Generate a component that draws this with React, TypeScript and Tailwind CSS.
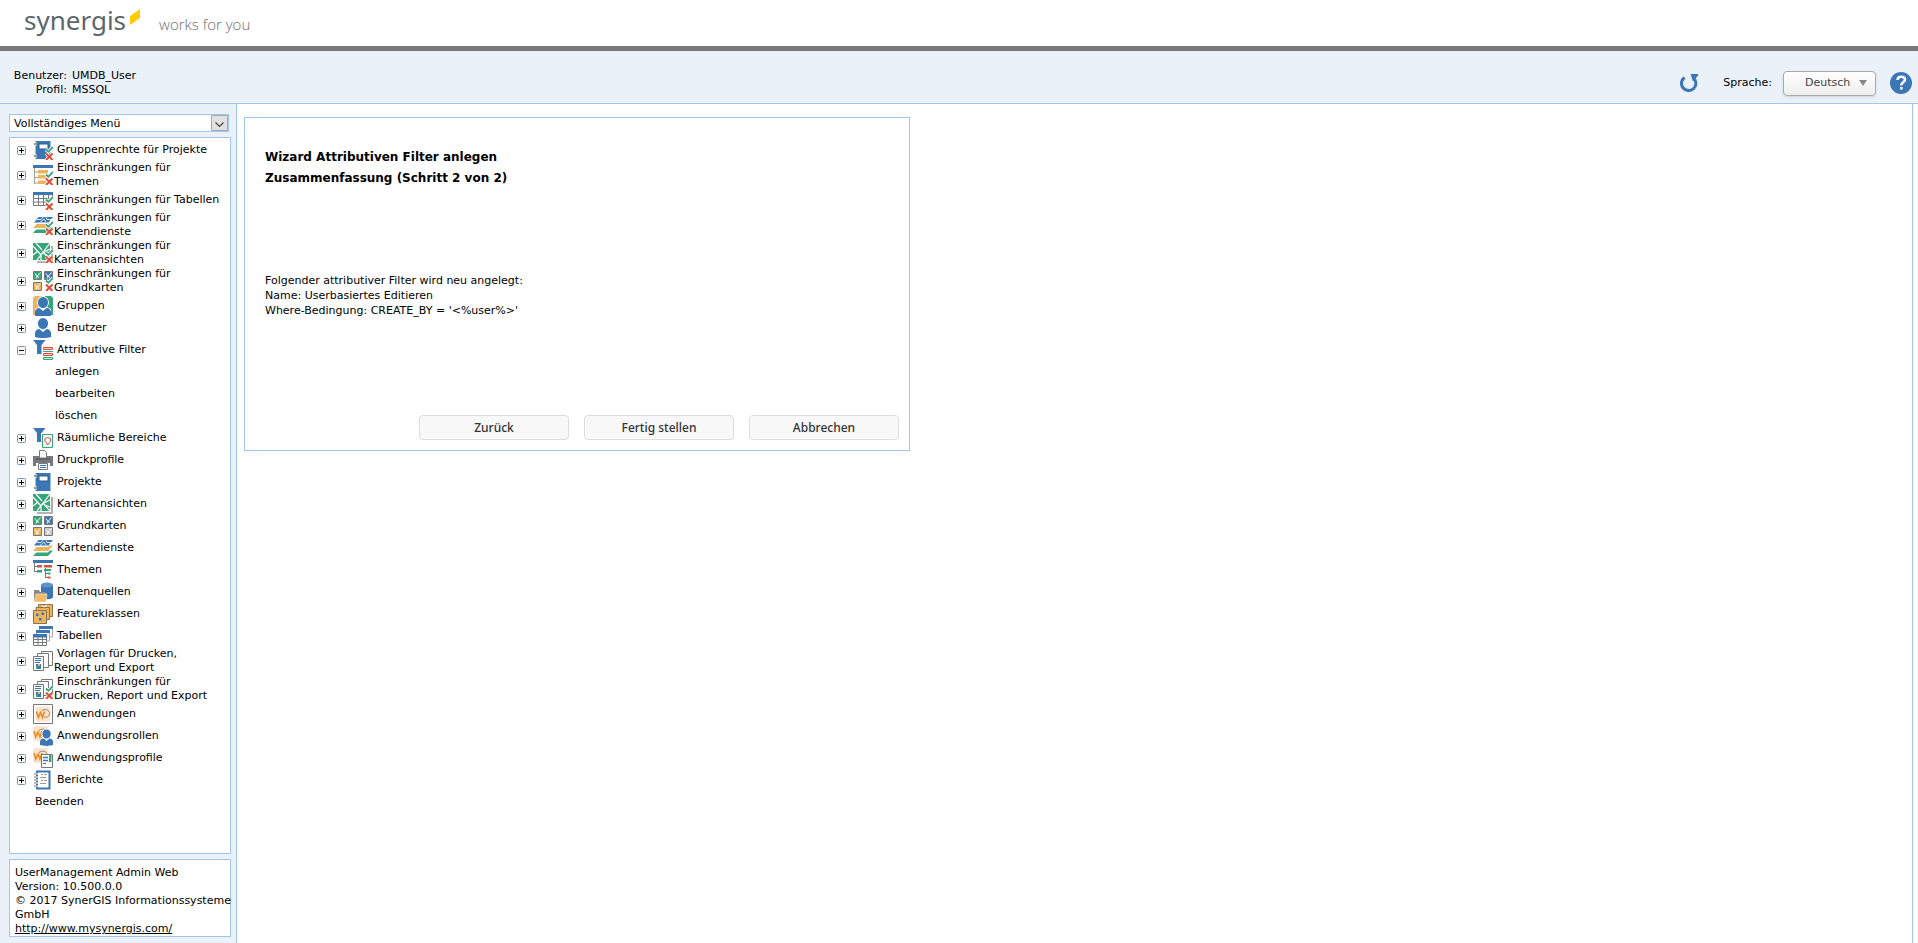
import type { ReactNode } from 'react';

interface MenuEntry {
    label: string;
    icon: ReactNode;
    children?: string[];
}

const BLUE = '#3b76b5';
const GREEN = '#35a678';
const RED = '#dd4f3c';
const ORANGE = '#ecb45c';
const GRAY = '#77787b';

function Icon({ children }: { children: ReactNode }) {
    return (
        <svg viewBox="0 0 20 20" className="h-5 w-5 shrink-0" fill="none" aria-hidden="true">
            {children}
        </svg>
    );
}

function Restriction() {
    return (
        <>
            <path d="M13 9.5l2.3 2.3L20 7" stroke="#fff" strokeWidth="3.4" />
            <path d="M13 9.5l2.3 2.3L20 7" stroke={GREEN} strokeWidth="1.8" />
            <path d="M13 13.5l6.5 6.5M19.5 13.5L13 20" stroke="#fff" strokeWidth="3.2" />
            <path d="M13 13.5l6.5 6.5M19.5 13.5L13 20" stroke={RED} strokeWidth="2" />
        </>
    );
}

function Notebook() {
    return (
        <>
            <path d="M2.5 1h15v18h-15z" fill={BLUE} />
            <path d="M6 4h9v5H6z" fill="#fff" stroke="#285d96" />
            <path d="M1 4h3M1 16h3" stroke="#fff" strokeWidth="3" />
            <path d="M1 4h3M1 16h3" stroke={GRAY} strokeWidth="1.4" />
        </>
    );
}

function MapView() {
    return (
        <>
            <path d="M19 3v16H4" stroke="#9a9a9a" strokeWidth="1.6" />
            <path d="M0 0h17v17H0z" fill={GREEN} />
            <path
                d="M0 3l8 9 9-12M3 0l6 7M0 12l5-4M4 17l6-8 7 8M11 9l6-3M12 11l5 2M8 12v5"
                stroke="#fff"
                strokeWidth="1.2"
            />
        </>
    );
}

function MapTile({ x, y, fill }: { x: number; y: number; fill: string }) {
    return (
        <g transform={`translate(${x} ${y})`}>
            <path d="M.5.5h8v8h-8z" fill={fill} stroke={GRAY} />
            <path d="M2 2.500l2 3L7.500 1.500M3 7.500l1-2 2 1" stroke="#fff" />
        </g>
    );
}

function BaseMaps() {
    return (
        <>
            <MapTile x={0} y={0} fill={GREEN} />
            <MapTile x={11} y={0} fill={BLUE} />
            <MapTile x={0} y={11} fill={ORANGE} />
            <MapTile x={11} y={11} fill="#c9c9c9" />
        </>
    );
}

function MapLayers() {
    return (
        <>
            <path d="M5 12.500h15L15 18H0z" fill={GREEN} />
            <path d="M5 8h15l-5 6.500H0z" fill="#fff" />
            <path d="M5 7.500h15L15 13H0z" fill={ORANGE} />
            <path d="M5 3h15l-5 6H0z" fill="#fff" />
            <path d="M5.500 2H20l-4.500 5.500H1z" fill={BLUE} />
            <path d="M4 4.500h4l2-2.500M7 7.500l4-3.500 2 3M13 2l1 2.500h4" stroke="#fff" strokeWidth=".8" />
        </>
    );
}

function Funnel() {
    return <path d="M0 0h12.500L8.500 5v9H4V5z" fill={BLUE} />;
}

function Person({ x, y, scale, fill }: { x: number; y: number; scale: number; fill: string }) {
    return (
        <g transform={`translate(${x} ${y}) scale(${scale})`} fill={fill}>
            <path d="M8 0a5 5 0 0 1 5 5.500c0 3-2 5.500-5 5.500S3 8.500 3 5.500A5 5 0 0 1 8 0z" />
            <path d="M0 19v-4c0-2 2-4 4.500-4L8 14l3.500-3c2.500 0 4.500 2 4.500 4v4c-4 1.300-12 1.300-16 0z" />
        </g>
    );
}

function Reports() {
    return (
        <>
            <path d="M8.500.5h11v14h-11z" fill="#fff" stroke={GRAY} />
            <path d="M4.500 2.500h11v14h-11z" fill="#fff" stroke={GRAY} />
            <path d="M.5 5.500h10v14H.5z" fill="#fff" stroke={GRAY} />
            <path d="M2 7.500h6M2 9.500h6M2 11.500h5" stroke={BLUE} />
            <path d="M3 13h5v5H3z" fill={BLUE} />
            <path d="M3 15h2v3H3z" fill={GREEN} />
            <path d="M5 13h2v2H5z" fill={ORANGE} />
        </>
    );
}

function AppMark() {
    return (
        <>
            <rect width="15" height="15" rx="3" fill="#fbe3cc" />
            <path d="M1 5l1.800 6L5 6l2 5 2-6" stroke="#ee8a1d" strokeWidth="1.600" />
            <path d="M6 4.500C9 2 14 3 14 7s-4 4.500-5.500 3" stroke="#8d8781" />
        </>
    );
}

const menu: MenuEntry[] = [
    {
        label: 'Gruppenrechte für Projekte',
        icon: <><Notebook /><Restriction /></>,
    },
    {
        label: 'Einschränkungen für\nThemen',
        icon: (
            <>
                <path d="M0 0h20v3H0z" fill={BLUE} />
                <path d="M1.500 3v16M1 7h4M1 12.500h4M1 18h4" stroke="#a0a0a0" />
                <path d="M5 5h10v3.500H5zM5 10h9v3.500H5zM5 15.500h8V19H5z" fill={ORANGE} />
                <Restriction />
            </>
        ),
    },
    {
        label: 'Einschränkungen für Tabellen',
        icon: (
            <>
                <path d="M0 2h20v3H0z" fill={BLUE} />
                <path d="M.5 5v10.500M5.500 5v10.500M10.500 5v10.500M15.500 5v10M19.500 5v4M0 8.500h20M0 12h15M0 15.500h13" stroke={GRAY} />
                <Restriction />
            </>
        ),
    },
    {
        label: 'Einschränkungen für\nKartendienste',
        icon: <><MapLayers /><Restriction /></>,
    },
    {
        label: 'Einschränkungen für\nKartenansichten',
        icon: <><MapView /><Restriction /></>,
    },
    {
        label: 'Einschränkungen für\nGrundkarten',
        icon: (
            <>
                <MapTile x={0} y={0} fill={GREEN} />
                <MapTile x={11} y={0} fill={BLUE} />
                <MapTile x={0} y={11} fill={ORANGE} />
                <Restriction />
            </>
        ),
    },
    {
        label: 'Gruppen',
        icon: (
            <>
                <path d="M0 19V2l2-2h6v14l-4 5z" fill={ORANGE} />
                <path d="M20 19V2l-2-2h-6v14l4 5z" fill={GREEN} />
                <path d="M10 0a6.500 6.500 0 0 1 4 11l4 2v7H2v-7l4-2A6.500 6.500 0 0 1 10 0z" fill="#fff" />
                <Person x={2} y={1} scale={1} fill={BLUE} />
            </>
        ),
    },
    {
        label: 'Benutzer',
        icon: <Person x={2} y={0} scale={1} fill={BLUE} />,
    },
    {
        label: 'Attributive Filter',
        icon: (
            <>
                <Funnel />
                <path d="M9 6h11v14H9z" fill="#fff" />
                <path d="M10.500 7.500h9v2h-9zM10.500 13.500h9v2h-9z" stroke={RED} fill="#f8d3cd" />
                <path d="M10 11.500h10M10.500 17.500h9v2h-9z" stroke={GREEN} fill="#c4e7da" />
            </>
        ),
        children: ['anlegen', 'bearbeiten', 'löschen'],
    },
    {
        label: 'Räumliche Bereiche',
        icon: (
            <>
                <Funnel />
                <path d="M8 5h12v15H8z" fill="#fff" />
                <path d="M9.500 6.500h10v13h-10z" fill="#f4fbf8" stroke={GREEN} />
                <path d="M12 10.500l2.500-1 3 1v3l-3 3.500-1-2.500-1.500-1z" stroke={RED} />
            </>
        ),
    },
    {
        label: 'Druckprofile',
        icon: (
            <>
                <path d="M0 6h20v10h-3v-3H3v3H0z" fill={GRAY} />
                <path d="M3 9h14" stroke="#4f5052" />
                <path d="M6.500 8V.5h5l2 2V8z" fill="#fff" stroke={GRAY} />
                <path d="M5.500 13.500h9v6h-9z" fill="#fff" stroke={GRAY} />
                <path d="M7 15.500h6M7 17.500h6" stroke={BLUE} />
            </>
        ),
    },
    { label: 'Projekte', icon: <Notebook /> },
    { label: 'Kartenansichten', icon: <MapView /> },
    { label: 'Grundkarten', icon: <BaseMaps /> },
    { label: 'Kartendienste', icon: <MapLayers /> },
    {
        label: 'Themen',
        icon: (
            <>
                <path d="M0 0h20v3H0z" fill={BLUE} />
                <path d="M1.500 3v9M1 6.500h4M1 11.500h4M12.500 8v10M12 13.500h3M12 17.500h3" stroke={GRAY} />
                <path d="M4 5h5v2.500H4zM11 5h8v2.500h-8z" fill={RED} />
                <path d="M4 10h5v2.500H4zM11 9h7v2h-7z" fill={GREEN} />
                <path d="M14.500 12.500h3v2h-3z" fill={GREEN} />
                <path d="M14.500 16.500h3v2h-3z" fill={RED} />
            </>
        ),
    },
    {
        label: 'Datenquellen',
        icon: (
            <>
                <path d="M8 3v12c0 3 12 3 12 0V3z" fill={BLUE} />
                <ellipse cx="14" cy="3" rx="6" ry="2.500" fill="#5f93c9" />
                <path d="M1 19V8h5l1 2h6v9z" fill="#8a8a8a" />
                <path d="M3 12h11l-1 8H1z" fill="#f1bc68" stroke="#fff" strokeWidth=".5" />
            </>
        ),
    },
    {
        label: 'Featureklassen',
        icon: (
            <>
                <path d="M5.500.5h14v12h-14z" fill={ORANGE} stroke="#8a7350" />
                <path d="M3 3.500h13.500v12H3z" fill={ORANGE} stroke="#8a7350" />
                <path d="M.5 6.500h13v13H.5z" fill={ORANGE} stroke="#8a7350" />
                <path d="M9 1.500l2 1.500 3-2" stroke="#fff" />
                <path d="M3 9.500h2.500V12H3zM8.500 8.500H11V11H8.500zM6 14h2.500v2.500H6z" fill={BLUE} />
            </>
        ),
    },
    {
        label: 'Tabellen',
        icon: (
            <>
                <path d="M6.500 1h13v10h-13z" fill="#fff" stroke="#a5a6a8" />
                <path d="M6 0h14v3H6z" fill={BLUE} />
                <path d="M3.500 5h13v10h-13z" fill="#fff" stroke="#a5a6a8" />
                <path d="M3 4h14v3H3z" fill={BLUE} />
                <path d="M.5 9.500h13v10H.5z" fill="#fff" />
                <path d="M0 8h14v3.500H0z" fill={BLUE} />
                <path d="M.5 11v8.500h13V11M5 11v8.500M9.500 11v8.500M0 13.500h14M0 16.500h14" stroke={GRAY} />
            </>
        ),
    },
    { label: 'Vorlagen für Drucken,\nReport und Export', icon: <Reports /> },
    {
        label: 'Einschränkungen für\nDrucken, Report und Export',
        icon: <><Reports /><Restriction /></>,
    },
    {
        label: 'Anwendungen',
        icon: (
            <>
                <path d="M.5.5h19v19H.5z" fill="#fff" stroke={GRAY} />
                <g transform="translate(2.500 2.500)"><AppMark /></g>
            </>
        ),
    },
    {
        label: 'Anwendungsrollen',
        icon: (
            <>
                <AppMark />
                <circle cx="13.500" cy="8" r="5" fill="#fff" />
                <Person x={7} y={3.5} scale={0.82} fill={BLUE} />
            </>
        ),
    },
    {
        label: 'Anwendungsprofile',
        icon: (
            <>
                <AppMark />
                <path d="M8.500 6.500h11v13h-11z" fill="#fff" stroke={GRAY} />
                <path d="M10 9.500h5M10 12.500h5" stroke={BLUE} strokeWidth="1.500" />
                <path d="M10 15.500h3" stroke={BLUE} />
                <path d="M16 7h2.500v7H16z" fill={GREEN} />
            </>
        ),
    },
    {
        label: 'Berichte',
        icon: (
            <>
                <path d="M4 1.500h12.500v17H4z" fill="#fff" stroke={BLUE} strokeWidth="2" />
                <path d="M1 4h4M1 7h4M1 10h4M1 13h4M1 16h4" stroke="#fff" strokeWidth="2" />
                <path d="M1 4h4M1 7h4M1 10h4M1 13h4M1 16h4" stroke={GRAY} />
                <path d="M8 4.500h2M11 4.500h3M7 7.500h6M8 10.500h2M11 10.500h3M7 13.500h6" stroke="#9b9b9b" />
            </>
        ),
    },
];

function Expander({ open, label }: { open: boolean; label: string }) {
    return (
        <button type="button" aria-label={label} aria-expanded={open} className="mr-[7px] h-[9px] w-[9px] shrink-0">
            <svg viewBox="0 0 9 9" className="block h-[9px] w-[9px]">
                <rect x=".5" y=".5" width="8" height="8" rx="1" fill="#f5f5f2" stroke="#7898b5" />
                <path d={open ? 'M2 4.500h5' : 'M2 4.500h5M4.500 2v5'} stroke="#000" />
            </svg>
        </button>
    );
}

function Header() {
    return (
        <header>
            <div className="flex h-[46px] items-start pl-6">
                <span className="font-['Noto_Sans',sans-serif] text-[26px] leading-[40px] text-[#5d676e]">
                    synergis
                </span>
                <svg viewBox="0 0 12 18" className="mt-2 ml-[3px] h-[18px] w-3" aria-hidden="true">
                    <path d="M1 8L11 1v9L1 17z" fill="#ffcb05" />
                </svg>
                <span className="ml-[18px] font-['Open_Sans',sans-serif] text-[15px] leading-[48px] font-light text-[#6d6e71]">
                    works for you
                </span>
            </div>
            <div className="h-[5px] bg-[#77787b]" />
            <div className="flex h-[53px] items-center justify-between border-b border-[#a3c6ee] bg-[#eaf1f9] pr-1.5">
                <dl className="grid grid-cols-[53px_auto] gap-x-[5px] pt-3 pl-3.5 leading-[14px]">
                    <dt className="flex justify-end">Benutzer:</dt>
                    <dd>UMDB_User</dd>
                    <dt className="flex justify-end">Profil:</dt>
                    <dd>MSSQL</dd>
                </dl>
                <div className="flex items-center pt-3">
                    <button type="button" aria-label="Aktualisieren" className="mr-6">
                        <svg viewBox="0 0 19 18" className="h-[18px] w-[19px]" fill="none">
                            <path d="M4.500 3.500a7.200 7.200 0 1 0 9.500 1" stroke={BLUE} strokeWidth="3" />
                            <path d="M10.500 0H18v1.500l-5 6z" fill={BLUE} />
                        </svg>
                    </button>
                    <label htmlFor="language" className="mr-[11px]">Sprache:</label>
                    <div className="relative mr-3.5">
                        <select
                            id="language"
                            className="h-[25px] w-[93px] appearance-none rounded-[4px] border border-[#aaa] bg-linear-to-b from-white to-[#eee] pl-[21px] text-[11px] text-[#444] shadow-sm"
                        >
                            <option>Deutsch</option>
                        </select>
                        <svg viewBox="0 0 8 6" className="pointer-events-none absolute top-[9px] right-[9px] h-1.5 w-2">
                            <path d="M0 0h8L4 6z" fill="#888" />
                        </svg>
                    </div>
                    <button type="button" aria-label="Hilfe">
                        <svg viewBox="0 0 22 22" className="h-[22px] w-[22px]" fill="none">
                            <circle cx="11" cy="11" r="11" fill={BLUE} />
                            <path d="M7.500 8c0-4.500 7.500-4 7.500-.5 0 3-3.800 2.500-3.800 6" stroke="#fff" strokeWidth="2.500" />
                            <path d="M10 15h2.500v2.500H10z" fill="#fff" />
                        </svg>
                    </button>
                </div>
            </div>
        </header>
    );
}

function Sidebar() {
    return (
        <aside className="flex w-[237px] shrink-0 flex-col border-r border-[#a3c6ee] bg-[#eaf1f9] pt-2.5 pb-1.5 pl-[9px]">
            <div className="relative mb-[5px] w-[220px]">
                <select
                    aria-label="Menü"
                    className="block h-[18px] w-full appearance-none border border-[#a3c6ee] bg-white pt-px pl-1 text-[11px]"
                >
                    <option>Vollständiges Menü</option>
                </select>
                <svg viewBox="0 0 17 16" className="pointer-events-none absolute top-px right-px h-4 w-[17px]" fill="none">
                    <path d="M.5.5h16v15H.5z" fill="#e1e1e1" stroke="#a9a9a9" />
                    <path d="M4.500 7.500l4 4 4-4" stroke="#444" strokeWidth="1.200" />
                </svg>
            </div>

            <nav className="w-[222px] flex-1 border border-[#a3c6ee] bg-white pt-px">
                <ul>
                    {menu.map((entry) => (
                        <li key={entry.label}>
                            <div className="flex min-h-[22px] items-center pl-[7px]">
                                <Expander open={!!entry.children} label={entry.label} />
                                <Icon>{entry.icon}</Icon>
                                <a href="#" className="ml-px indent-[3px] leading-[14px] whitespace-pre">
                                    {entry.label}
                                </a>
                            </div>
                            {entry.children && (
                                <ul className="pl-[45px] leading-[22px]">
                                    {entry.children.map((child) => (
                                        <li key={child}>
                                            <a href="#">{child}</a>
                                        </li>
                                    ))}
                                </ul>
                            )}
                        </li>
                    ))}
                    <li className="pl-[25px] leading-[22px]">
                        <a href="#">Beenden</a>
                    </li>
                </ul>
            </nav>

            <footer className="mt-[5px] w-[222px] border border-[#a3c6ee] bg-white pt-1.5 pl-[5px] leading-[14px] whitespace-nowrap">
                <p>UserManagement Admin Web</p>
                <p>Version: 10.500.0.0</p>
                <p>© 2017 SynerGIS Informationssysteme</p>
                <p>GmbH</p>
                <p>
                    <a href="http://www.mysynergis.com/" className="underline">
                        http://www.mysynergis.com/
                    </a>
                </p>
            </footer>
        </aside>
    );
}

function Wizard() {
    return (
        <section className="w-[666px] border border-[#a3c6ee] pt-[29px] pr-2.5 pb-2.5 pl-5">
            <h1 className="text-[12px] leading-[21px] font-bold">
                Wizard Attributiven Filter anlegen
                <br />
                Zusammenfassung (Schritt 2 von 2)
            </h1>
            <div className="mt-[84px] leading-[15px]">
                <p>Folgender attributiver Filter wird neu angelegt:</p>
                <p>Name: Userbasiertes Editieren</p>
                <p>Where-Bedingung: CREATE_BY = '&lt;%user%&gt;'</p>
            </div>
            <div className="mt-[97px] flex justify-end gap-[15px]">
                {['Zurück', 'Fertig stellen', 'Abbrechen'].map((label) => (
                    <button
                        key={label}
                        type="button"
                        className="h-[25px] w-[150px] rounded-[4px] border border-[#ddd] bg-[#f8f8f8] font-['Noto_Sans',sans-serif] text-[12px] font-medium text-[#333]"
                    >
                        {label}
                    </button>
                ))}
            </div>
        </section>
    );
}

export default function App() {
    return (
        <div className="flex min-h-screen flex-col bg-white font-['DejaVu_Sans',sans-serif] text-[11px] text-black">
            <Header />
            <div className="flex flex-1">
                <Sidebar />
                <main className="mr-[5px] flex-1 border-r border-[#a3c6ee] pt-[13px] pl-[7px]">
                    <Wizard />
                </main>
            </div>
        </div>
    );
}
